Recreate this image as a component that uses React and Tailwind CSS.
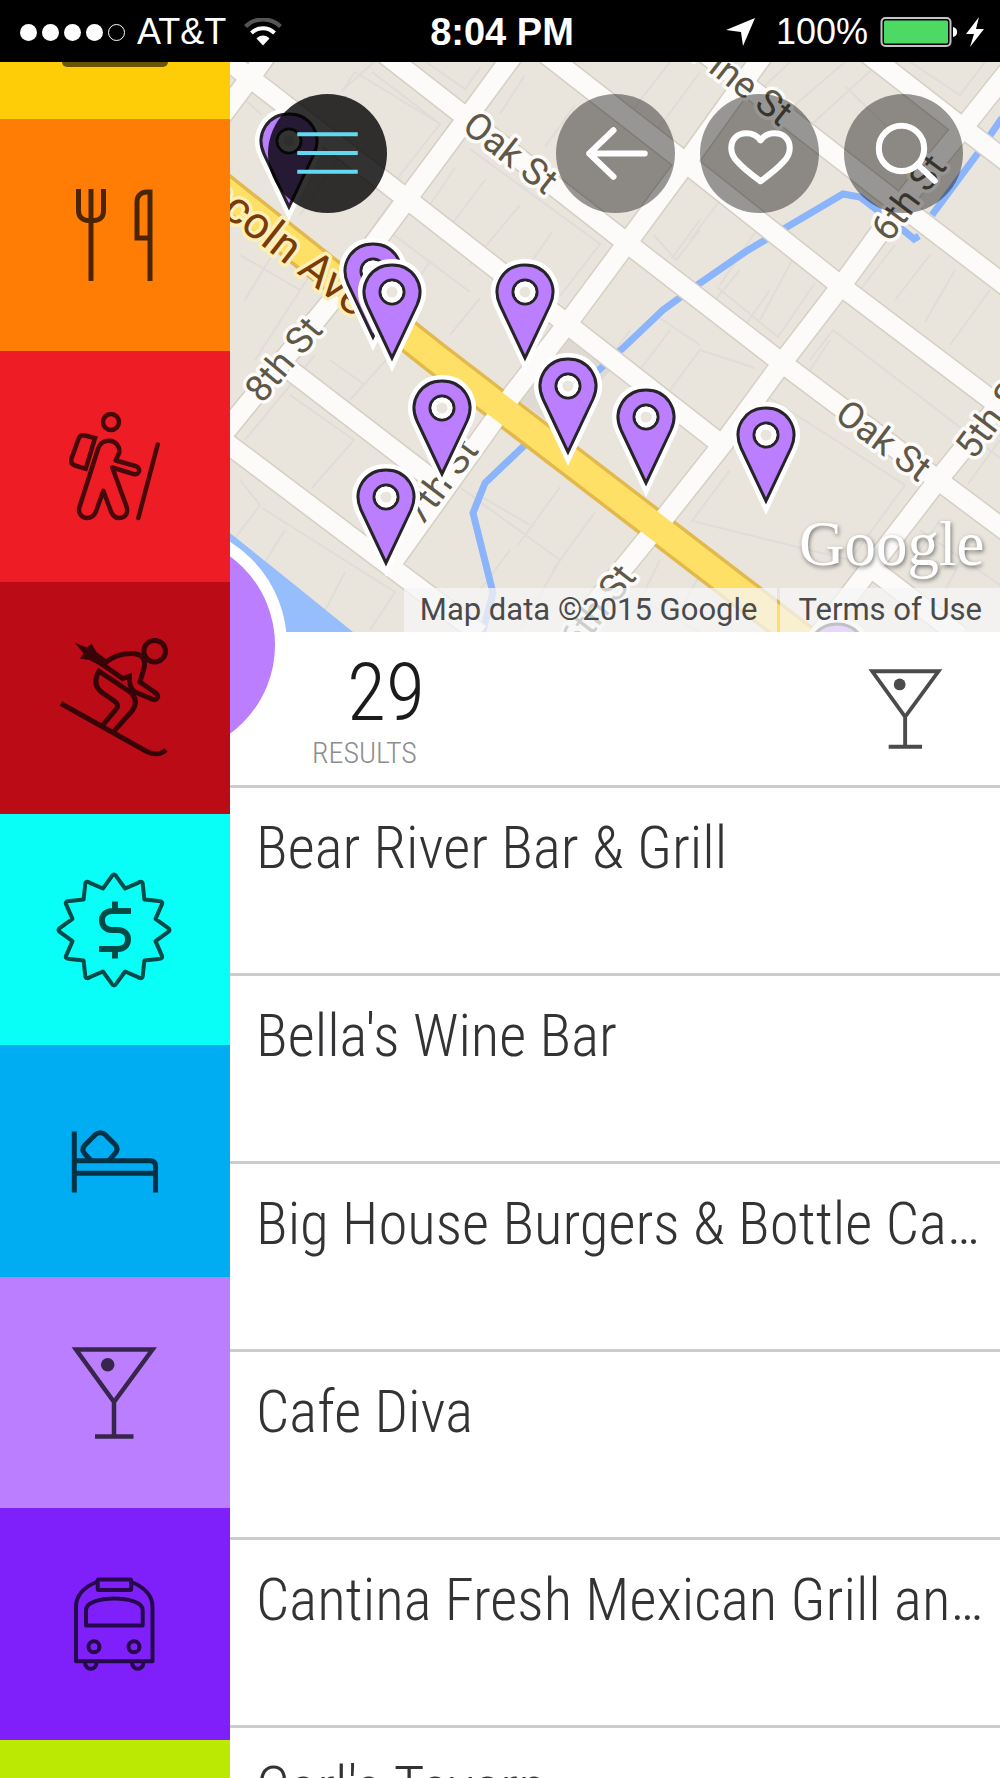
import React, { useState } from 'react'

const condensed = "font-['Roboto_Condensed','Liberation_Sans_Narrow',Roboto,sans-serif] font-light"

// twelve pointed badge, tips rounded off with a short curve
const polar = (r, deg) => {
  const a = (deg * Math.PI) / 180
  return `${(59 + r * Math.sin(a)).toFixed(1)} ${(60 - r * Math.cos(a)).toFixed(1)}`
}
const burst =
  Array.from({ length: 12 }, (_, i) => {
    const tip = i * 30
    return `${i === 0 ? 'M' : 'L'}${polar(53, tip - 3)}Q${polar(58, tip)} ${polar(53, tip + 3)}L${polar(43, tip + 15)}`
  }).join('') + 'Z'

function Icon({ children, className = 'size-[120px] opacity-70', width = 5 }) {
  return (
    <svg
      viewBox="0 0 120 120"
      className={className}
      fill="none"
      stroke="#000"
      strokeWidth={width}
      aria-hidden="true"
    >
      {children}
    </svg>
  )
}

function DiningIcon() {
  return (
    <Icon>
      <path d="M23.5 14V36C23.5 41.5 27.5 45.5 33 45.5H39C45 45.5 48.5 41.5 48.5 36V14M36 14V106" />
      <path d="M95 106V17H92C86 17 82 21 82 27V63H95" />
    </Icon>
  )
}

function HikingIcon() {
  return (
    <Icon width={4.5}>
      <circle cx="56" cy="16" r="8" />
      <path d="M40 32L30 29.5C27 28.7 24.5 30 23.5 33L16.5 52.5C15.5 56 17 58.5 20 59.5L30.7 62.8Z" />
      <path
        strokeLinejoin="round"
        d="M43.3 42C45 37.5 49 34.8 54 34.8C60.5 34.8 65 40 64.3 46.5L60.7 54.5L80.5 60C86.5 62 84.5 69.5 78.5 68L57.3 61.5L71.7 101C73.5 108 69.5 112 64 112C60 112 57.5 109 56 105.5L48.3 84.8L41 105.5C39 110 36 112 32.3 112C27 112 22.5 107.5 24.5 101Z"
      />
      <path strokeLinecap="round" d="M102.7 38.5L83.3 112" />
    </Icon>
  )
}

function SkiingIcon() {
  return (
    <Icon width={5}>
      <circle cx="99.7" cy="13.2" r="10.8" />
      <path d="M6 65.5L91.7 113.5C98.5 117 106 116.5 111 112" />
      <path d="M50 25C58 18 68 15.5 76.7 15.5C86 15.5 91 20.5 89.3 29L85 44L100 54.5C105 58 102 63 97.5 61.2L80 54C75 51 74 46 74.3 38.2L67.7 40.5L36.7 19" />
      <path d="M47.7 87.2L61 71.5C63.5 68.5 63 66 60 63.5L47 54.5C40 49 39 42 44 33.2L73 52.5C81 58 82.5 65 77 73L59 93.2" />
      <path
        fill="#000"
        stroke="none"
        d="M20 5L32 9.5L36.7 5.5L41 13.5L54 23.5L49 29.5L34 22L25 20.5L28.5 15.5Z"
      />
    </Icon>
  )
}

function DealsIcon() {
  return (
    <Icon width={4}>
      <path d={burst} strokeLinejoin="round" />
      <path
        strokeWidth="6"
        d="M76 41H57C51 41 47 45 47 50.5S51 60 57 60H63C69 60 73 64 73 69.5S69 79 63 79H44M60 31.5V41M60 79V88.5"
      />
    </Icon>
  )
}

function LodgingIcon() {
  return (
    <Icon>
      <path d="M19.3 30.5V91.5M19.3 59.7H95C98.5 59.7 100.5 61.5 100.5 65V91.5M19.3 72.3H100.5" />
      <path d="M36 59.5L29.5 52.5C27.5 50 27.5 47 29.5 44.5L40.5 33.5C43 31 47.5 31 50 33.5L60.5 44C62.5 46.5 62.5 49.5 60.5 52L54 59.5" />
    </Icon>
  )
}

function BarIcon({ className }) {
  return (
    <Icon width={4.5} className={className}>
      <path d="M21 16.5H97.5L59 69ZM59 69V103.5M40 103.5H78.5" />
      <circle cx="52.7" cy="31.7" r="6.8" fill="#000" stroke="none" />
    </Icon>
  )
}

function TransitIcon() {
  return (
    <Icon width={4}>
      <path d="M41.7 18C28 23.5 21 32 21 43V97.2H97.5V43C97.5 32 90 23.5 76.5 18" strokeLinejoin="round" />
      <rect x="42.7" y="15.5" width="33.5" height="10.5" rx="1" />
      <path d="M31 61.5V46C31 30.5 87.7 30.5 87.7 46V61.5Z" strokeLinejoin="round" />
      <circle cx="39" cy="82.8" r="5.5" />
      <circle cx="79" cy="82.8" r="5.5" />
      <path d="M30 98C30 107 41.5 107 41.5 98M77 98C77 107 88.5 107 88.5 98" />
    </Icon>
  )
}

const categories = [
  { name: 'Dining', color: 'bg-[#ff7d05]', icon: DiningIcon },
  { name: 'Hiking', color: 'bg-[#ee1c25]', icon: HikingIcon },
  { name: 'Skiing', color: 'bg-[#bb0b17]', icon: SkiingIcon },
  { name: 'Deals', color: 'bg-[#08fff8]', icon: DealsIcon },
  { name: 'Lodging', color: 'bg-[#00adf2]', icon: LodgingIcon },
  { name: 'Bars', color: 'bg-[#bb7eff]', icon: BarIcon },
  { name: 'Transit', color: 'bg-[#7f20fb]', icon: TransitIcon },
]

const places = [
  'Bear River Bar & Grill',
  "Bella's Wine Bar",
  'Big House Burgers & Bottle Ca…',
  'Cafe Diva',
  'Cantina Fresh Mexican Grill an…',
  "Carl's Tavern",
]

const roads = [
  'M220 54L250 78L407 199L567 324L722 445',
  'M385 54L467 118L627 243L782 363L938 480L1010 534',
  'M546 54L686 163L841 286L1010 414',
  'M706 54L900 205L1010 289',
  'M868 54L963 128L1010 164',
  'M220 438L387 564L480 634',
  'M290 370L437 483',
  'M870 567L960 636',
  'M220 118L250 78L270 50',
  'M514 54L467 118L407 199L330 303L220 438',
  'M764 54L686 163L627 243L567 324L513 394L392 563',
  'M1022 54L963 128L900 205L841 286L782 363L722 445L665 517L568 636',
  'M1010 391L938 480L818 636',
]

// faint parcel outlines inside the blocks
const parcels =
  'M342 91L374 62M342 91L355 72L440 124L393 184M372 72L440 124M426 62L465 89L480 68M500 114L525 75M545 147L575 105M470 149L600 244L560 296M455 168L425 212M485 180L440 240M520 205L470 265M552 232L505 300M240 95L262 115M300 120L270 160M345 150L300 215M395 196L350 260M390 232L470 292M430 262L390 318M480 298L450 335M654 235L676 260L700 230M700 220L672 258M724 195L690 240M760 225L720 285M795 255L760 320M717 287L778 337L815 283M740 270L715 300M770 290L735 340M895 245L860 290M930 255L895 300M955 270L925 322M990 290L950 345M625 120L670 62M650 140L700 72M750 100L790 62M780 118L845 62M800 135L880 62M846 87L890 130M910 62L960 95L985 62M245 440L315 355M290 395L354 440L312 488M365 385L330 360M395 350L350 400M240 480L260 505L230 545M262 508L395 592L370 630M285 530L260 570M345 572L320 620M450 480L560 560L520 630M560 487L518 545M595 512L553 570M475 493L530 525M510 550L480 590M810 360L833 330L1000 458M830 340L810 370M770 398L905 485L850 560L692 521L730 470M670 390L700 350L755 368M640 370L670 330M630 330L600 372M655 315L700 345M660 560L640 600L700 632M700 575L680 610M968 484L1000 440M920 530L1000 585M940 520L910 565M975 535L945 590M240 255L300 290M275 250L245 300M310 275L255 360M232 215L270 250'

const pins = [
  [289, 141],
  [373, 271],
  [392, 292],
  [525, 292],
  [442, 408],
  [386, 497],
  [568, 386],
  [646, 417],
  [766, 435],
  [837, 651],
]

const labels = [
  { text: 'Oak St', x: 511, y: 152, angle: 38 },
  { text: 'Oak St', x: 884, y: 440, angle: 37 },
  { text: 'Pine St', x: 788, y: 117, angle: 38, anchor: 'end' },
  { text: '8th St', x: 283, y: 359, angle: -50 },
  { text: '7th St', x: 440, y: 481, angle: -53 },
  { text: '6th St', x: 908, y: 197, angle: -53 },
  { text: '6th St', x: 627, y: 569, angle: -52, anchor: 'end' },
  { text: '5th St', x: 963, y: 453, angle: -53, anchor: 'start' },
]

function Pin({ x, y }) {
  const shape = 'M0 66L-25 13C-34 -7 -21 -27 0 -27S34 -7 25 13Z'
  return (
    <g transform={`translate(${x} ${y})`}>
      <path d={shape} fill="#fff" stroke="#fff" strokeWidth="12" strokeLinejoin="miter" />
      <path d={shape} fill="#bb7eff" stroke="#262428" strokeWidth="3" />
      <circle r="12" fill="#e9e5dd" stroke="#262428" strokeWidth="3" />
      <circle r="8" fill="none" stroke="#fff" strokeWidth="5" />
    </g>
  )
}

function StreetMap() {
  return (
    <svg
      viewBox="230 62 770 570"
      preserveAspectRatio="xMidYMid slice"
      className="block h-full w-full bg-[#e9e5dd]"
      role="img"
      aria-label="Map"
    >
      <path d={parcels} fill="none" stroke="#e0dcd7" strokeWidth="2" />
      <path d="M230 533L280 573L353 632H230Z" fill="#97befc" />
      <path d="M516 398L567 332L612 368L560 430Z" fill="#dedad3" />
      <g fill="none" stroke="#8ab4fc" strokeWidth="7">
        <path d="M1002 118L978 153L932 215" />
        <path d="M919 236L914 239L903 230L877 210L860 197L843 194L787 227L745 252L700 283L663 310L623 348L590 378" />
        <path d="M528 442L485 483L473 513L493 593L482 634" />
      </g>
      <g fill="none" stroke="#d5cfc4" strokeWidth="22">
        {roads.map((d) => (
          <path key={d} d={d} />
        ))}
      </g>
      <path d="M215 183L436 358L762 608L805 641" fill="none" stroke="#e3b94d" strokeWidth="33" />
      <g fill="none" stroke="#fcfbf9" strokeWidth="19">
        {roads.map((d) => (
          <path key={d} d={d} />
        ))}
      </g>
      <path d="M215 183L436 358L762 608L805 641" fill="none" stroke="#ffe066" strokeWidth="26" />

      <g
        fontFamily="Roboto, sans-serif"
        fontSize="37"
        fill="#5f5848"
        stroke="#fcfbf9"
        strokeWidth="7"
        strokeLinejoin="round"
        paintOrder="stroke"
      >
        {labels.map((l) => (
          <text
            key={`${l.text}${l.x}`}
            transform={`translate(${l.x} ${l.y}) rotate(${l.angle})`}
            dy="0.36em"
            textAnchor={l.anchor || 'middle'}
          >
            {l.text}
          </text>
        ))}
        <text
          transform="translate(364 305) rotate(38)"
          dy="0.36em"
          textAnchor="end"
          fontSize="45"
          fill="#7a3b05"
          stroke="#fdefb9"
        >
          Lincoln Ave
        </text>
      </g>

      {pins.map(([x, y]) => (
        <Pin key={`${x}-${y}`} x={x} y={y} />
      ))}

      <text
        x="799"
        y="565"
        fontFamily="Liberation Serif, serif"
        fontSize="63"
        fill="#fff"
        className="drop-shadow-[1px_2px_2px_rgba(0,0,0,0.5)]"
      >
        Google
      </text>
    </svg>
  )
}

function RoundButton({ label, className, onClick, children }) {
  return (
    <button
      type="button"
      aria-label={label}
      onClick={onClick}
      className={`size-[119px] rounded-full ${className}`}
    >
      <svg
        viewBox="0 0 118 118"
        className="size-full"
        fill="none"
        stroke="#fff"
        strokeWidth="6"
        strokeLinecap="round"
        strokeLinejoin="round"
      >
        {children}
      </svg>
    </button>
  )
}

function StatusBar() {
  return (
    <header className="flex h-[62px] shrink-0 items-center bg-black pt-[2px] pr-4 pl-5 font-['Liberation_Sans',Arial,sans-serif] text-[36px] leading-none text-white">
      <div className="flex flex-1 items-center">
        <div className="flex gap-[5px]">
          {[0, 1, 2, 3].map((i) => (
            <span key={i} className="size-[17px] rounded-full bg-white" />
          ))}
          <span className="size-[17px] rounded-full border border-white" />
        </div>
        <span className="ml-3">AT&amp;T</span>
        <svg viewBox="0 0 38 28" className="ml-[18px] h-7 w-[38px]" fill="none" strokeWidth="4" aria-hidden="true">
          <path d="M1.5 8.5C11 -1 27 -1 36.5 8.5" stroke="#555" />
          <path d="M7.5 15C14 8.5 24 8.5 30.5 15" stroke="#fff" />
          <path d="M12.5 20.5C16 16.5 22 16.5 25.5 20.5L19 27.5Z" fill="#fff" />
        </svg>
      </div>
      <span className="text-[38px] font-bold">8:04 PM</span>
      <div className="flex flex-1 items-center justify-end">
        <svg viewBox="0 0 30 28" className="mr-5 h-7 w-[30px]" fill="#fff" aria-hidden="true">
          <path d="M29 0L17 28L15 14L0 12Z" />
        </svg>
        <span>100%</span>
        <svg viewBox="0 0 78 32" className="ml-3 h-8 w-[78px]" aria-hidden="true">
          <rect x="1.5" y="2" width="69" height="28" rx="4" fill="none" stroke="#c4c4c4" strokeWidth="2" />
          <rect x="4" y="4.5" width="64" height="23" rx="1.5" fill="#4cd964" />
          <path d="M73 11C78.5 12 78.5 20 73 21Z" fill="#fff" />
        </svg>
        <svg viewBox="0 0 18 30" className="ml-2 h-[30px] w-[18px]" fill="#fff" aria-hidden="true">
          <path d="M13 0L0 17H8L4 30L18 12H10Z" />
        </svg>
      </div>
    </header>
  )
}

export default function App() {
  const [active, setActive] = useState('Bars')

  return (
    <div className="flex h-screen flex-col overflow-hidden bg-white">
      <StatusBar />

      <div className="flex min-h-0 flex-1">
        <nav className="flex w-[230px] shrink-0 flex-col">
          <div className="flex h-[57px] shrink-0 justify-center bg-[#fecd08]">
            <span className="h-[5px] w-[106px] rounded-b-[8px] bg-[#6b5504]" />
          </div>
          {categories.map(({ name, color, icon: CategoryIcon }) => (
            <button
              key={name}
              type="button"
              aria-label={name}
              aria-pressed={active === name}
              onClick={() => setActive(name)}
              className={`flex flex-1 items-center justify-center ${color}`}
            >
              <CategoryIcon />
            </button>
          ))}
          <div className="h-[38px] shrink-0 bg-[#bbe903]" />
        </nav>

        <main className="flex min-w-0 flex-1 flex-col overflow-hidden">
          <section className="relative h-[570px] shrink-0">
            <StreetMap />
            <div className="absolute inset-x-0 top-8 flex justify-between pr-[37px] pl-[38px]">
              <RoundButton label="Menu" className="bg-black/80">
                <path d="M29 40H89M29 58.5H89M29 77H89" stroke="#62d9ee" strokeWidth="4" strokeLinecap="butt" />
              </RoundButton>
              <div className="flex gap-[25px]">
                <RoundButton label="Back" className="bg-black/40">
                  <path d="M88 59H33M57 36L33 59L57 82" />
                </RoundButton>
                <RoundButton label="Favorites" className="bg-black/40">
                  <path d="M60 46C56 40.5 51 39 46 39C37 39 31 45 31 53.5C31 58.5 33 63 37 67C43 74 51 80 60 86.5C69 80 77 74 83 67C87 63 89 58.5 89 53.5C89 45 83 39 74 39C69 39 64 40.5 60 46Z" />
                </RoundButton>
                <RoundButton label="Search" className="bg-black/40">
                  <circle cx="57" cy="54" r="22.5" />
                  <path d="M73 70L90 86" />
                </RoundButton>
              </div>
            </div>
            <div className="absolute right-0 bottom-0 flex gap-[3px] font-[Roboto,sans-serif] text-[31px] leading-[44px] text-[#4a4a4a]">
              <span className="bg-[#f5f5f5]/75 pr-5 pl-4">Map data ©2015 Google</span>
              <a href="#terms" className="bg-[#f5f5f5]/75 px-[18px]">
                Terms of Use
              </a>
            </div>
          </section>

          <section className="relative flex h-[156px] shrink-0 items-center justify-between border-b-[3px] border-[#cbcdcd] pr-[42px] pl-[82px]">
            <div className="absolute -top-[109px] -left-[187px] size-[244px] rounded-full border-[12px] border-white bg-[#bb7eff]" />
            <div className={`flex flex-col items-end ${condensed}`}>
              <span className="text-[80px] leading-[88px] text-[#1c1a1b]">29</span>
              <span className="mr-2 text-[30px] leading-8 text-[#8b8d8f]">RESULTS</span>
            </div>
            <BarIcon className="size-[104px] opacity-70" />
          </section>

          <ul className={`text-[59px] leading-[120px] text-[#333234] ${condensed}`}>
            {places.map((place) => (
              <li key={place} className="h-[188px] border-b-[3px] border-[#cbcdcd]">
                <a href="#place" className="block truncate pl-[26px]">
                  {place}
                </a>
              </li>
            ))}
          </ul>
        </main>
      </div>
    </div>
  )
}
